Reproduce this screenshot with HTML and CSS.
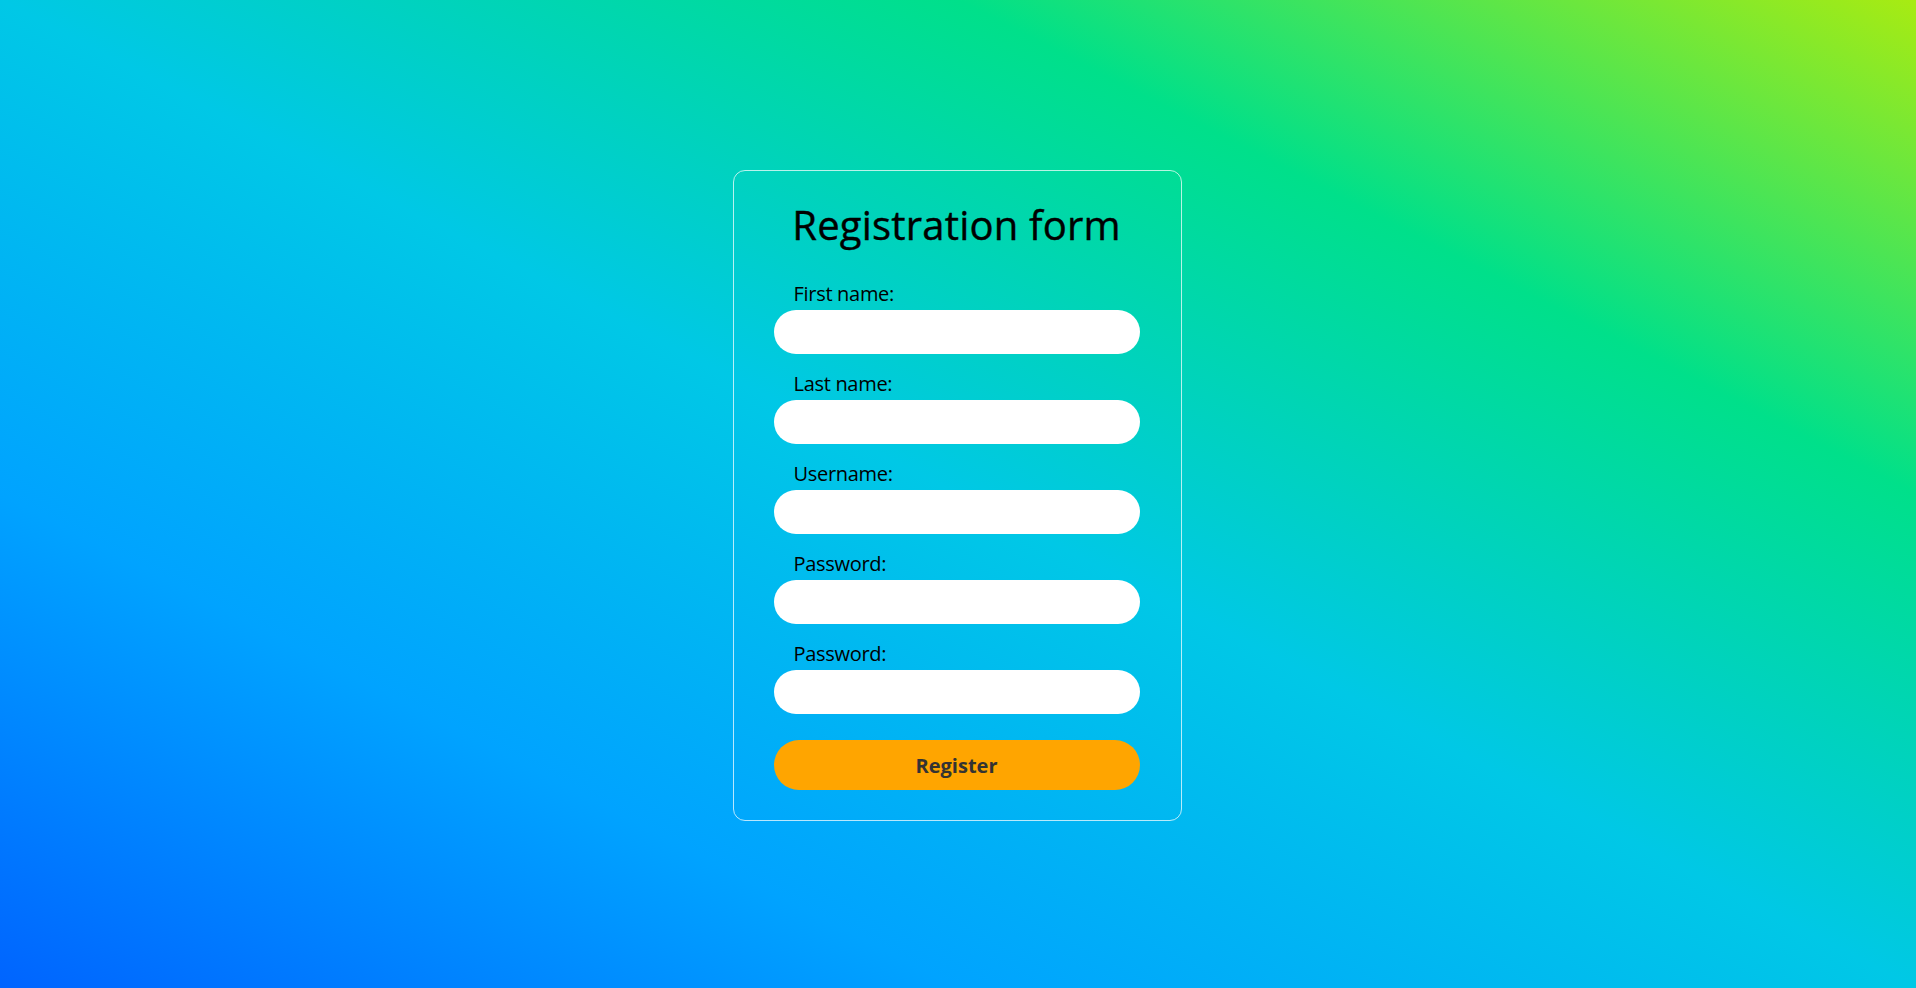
FILE: index.html
```html
<!DOCTYPE html>
<html lang="en">
<head>
<meta charset="utf-8">
<title>Registration form</title>
<link rel="stylesheet" href="styles.css">
</head>
<body>
<main class="page">
  <form class="card">
    <h1 class="title">Registration form</h1>
    <div class="field">
      <label class="label" for="first">First name:</label>
      <input class="input" id="first" type="text">
    </div>
    <div class="field">
      <label class="label" for="last">Last name:</label>
      <input class="input" id="last" type="text">
    </div>
    <div class="field">
      <label class="label" for="user">Username:</label>
      <input class="input" id="user" type="text">
    </div>
    <div class="field">
      <label class="label" for="pass">Password:</label>
      <input class="input" id="pass" type="password">
    </div>
    <div class="field">
      <label class="label" for="pass2">Password:</label>
      <input class="input" id="pass2" type="password">
    </div>
    <button class="btn" type="button">Register</button>
  </form>
</main>
</body>
</html>
```
FILE: styles.css
```css
* { box-sizing: border-box; }

html, body {
  margin: 0;
  height: 100%;
}

body {
  font-family: "Open Sans", "Noto Sans", sans-serif;
  color: #000;
  background: linear-gradient(to right top, #0064ff 0%, #00a3ff 25%, #00c8e6 50%, #00e08a 75%, #a8eb12 100%);
}

.page {
  height: 100%;
  display: flex;
  align-items: center;
  justify-content: center;
  padding-top: 3px;
  padding-right: 2px;
}

.card {
  width: 449px;
  padding: 30px 41px 30px 40px;
  border: 1px solid rgba(255, 255, 255, 0.72);
  border-radius: 12px;
  display: flex;
  flex-direction: column;
}

.title {
  margin: 0 0 33px;
  font-size: 40px;
  line-height: 48px;
  font-weight: 400;
  text-align: center;
  letter-spacing: 0.2px;
  -webkit-text-stroke: 0.4px #000;
}

.field {
  display: flex;
  flex-direction: column;
  margin-bottom: 18px;
}

.label {
  display: block;
  padding-left: 20px;
  font-size: 20px;
  line-height: 24px;
  margin-bottom: 4px;
  letter-spacing: -0.3px;
}

.input {
  display: block;
  width: 100%;
  height: 44px;
  border: none;
  border-radius: 22px;
  background: #fff;
  padding: 0 20px;
  font: inherit;
  font-size: 18px;
  outline: none;
}

.btn {
  margin-top: 8px;
  height: 50px;
  width: 100%;
  border: none;
  border-radius: 25px;
  background: #ffa500;
  color: #333;
  font-family: inherit;
  font-size: 20px;
  font-weight: 700;
  cursor: pointer;
}
```
